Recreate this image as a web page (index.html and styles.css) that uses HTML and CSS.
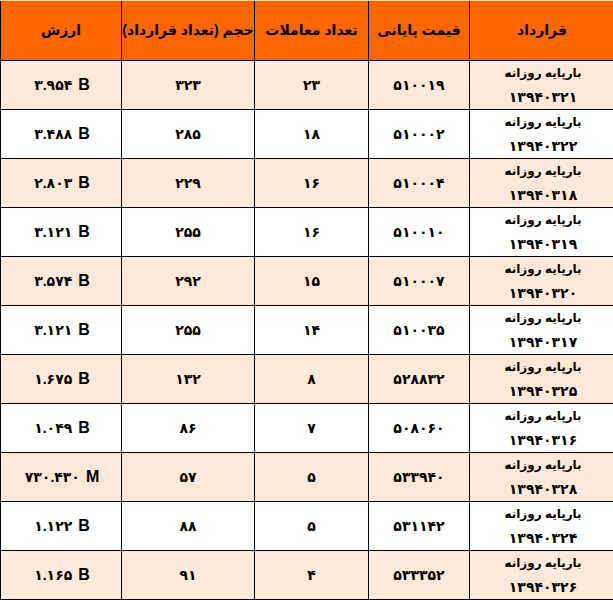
FILE: index.html
```html
<!DOCTYPE html>
<html lang="fa">
<head>
<meta charset="utf-8">
<title>قرارداد بارپایه روزانه</title>
<link rel="stylesheet" href="styles.css">
</head>
<body>
<div class="grid">
  <div class="cell head">قرارداد</div>
  <div class="cell head">قیمت پایانی</div>
  <div class="cell head">تعداد معاملات</div>
  <div class="cell head">حجم (تعداد قرارداد)</div>
  <div class="cell head">ارزش</div>

  <div class="cell odd contract"><span class="name">بارپایه روزانه</span><span>۱۳۹۴۰۳۲۱</span></div>
  <div class="cell odd">۵۱۰۰۱۹</div>
  <div class="cell odd">۲۳</div>
  <div class="cell odd">۳۲۳</div>
  <div class="cell odd val">۳.۹۵۴ <b>B</b></div>

  <div class="cell even contract"><span class="name">بارپایه روزانه</span><span>۱۳۹۴۰۳۲۲</span></div>
  <div class="cell even">۵۱۰۰۰۲</div>
  <div class="cell even">۱۸</div>
  <div class="cell even">۲۸۵</div>
  <div class="cell even val">۳.۴۸۸ <b>B</b></div>

  <div class="cell odd contract"><span class="name">بارپایه روزانه</span><span>۱۳۹۴۰۳۱۸</span></div>
  <div class="cell odd">۵۱۰۰۰۴</div>
  <div class="cell odd">۱۶</div>
  <div class="cell odd">۲۲۹</div>
  <div class="cell odd val">۲.۸۰۳ <b>B</b></div>

  <div class="cell even contract"><span class="name">بارپایه روزانه</span><span>۱۳۹۴۰۳۱۹</span></div>
  <div class="cell even">۵۱۰۰۱۰</div>
  <div class="cell even">۱۶</div>
  <div class="cell even">۲۵۵</div>
  <div class="cell even val">۳.۱۲۱ <b>B</b></div>

  <div class="cell odd contract"><span class="name">بارپایه روزانه</span><span>۱۳۹۴۰۳۲۰</span></div>
  <div class="cell odd">۵۱۰۰۰۷</div>
  <div class="cell odd">۱۵</div>
  <div class="cell odd">۲۹۲</div>
  <div class="cell odd val">۳.۵۷۴ <b>B</b></div>

  <div class="cell even contract"><span class="name">بارپایه روزانه</span><span>۱۳۹۴۰۳۱۷</span></div>
  <div class="cell even">۵۱۰۰۳۵</div>
  <div class="cell even">۱۴</div>
  <div class="cell even">۲۵۵</div>
  <div class="cell even val">۳.۱۲۱ <b>B</b></div>

  <div class="cell odd contract"><span class="name">بارپایه روزانه</span><span>۱۳۹۴۰۳۲۵</span></div>
  <div class="cell odd">۵۲۸۸۳۲</div>
  <div class="cell odd">۸</div>
  <div class="cell odd">۱۳۲</div>
  <div class="cell odd val">۱.۶۷۵ <b>B</b></div>

  <div class="cell even contract"><span class="name">بارپایه روزانه</span><span>۱۳۹۴۰۳۱۶</span></div>
  <div class="cell even">۵۰۸۰۶۰</div>
  <div class="cell even">۷</div>
  <div class="cell even">۸۶</div>
  <div class="cell even val">۱.۰۴۹ <b>B</b></div>

  <div class="cell odd contract"><span class="name">بارپایه روزانه</span><span>۱۳۹۴۰۳۲۸</span></div>
  <div class="cell odd">۵۳۳۹۴۰</div>
  <div class="cell odd">۵</div>
  <div class="cell odd">۵۷</div>
  <div class="cell odd val">۷۳۰.۴۳۰ <b>M</b></div>

  <div class="cell even contract"><span class="name">بارپایه روزانه</span><span>۱۳۹۴۰۳۲۴</span></div>
  <div class="cell even">۵۳۱۱۴۲</div>
  <div class="cell even">۵</div>
  <div class="cell even">۸۸</div>
  <div class="cell even val">۱.۱۲۲ <b>B</b></div>

  <div class="cell odd contract"><span class="name">بارپایه روزانه</span><span>۱۳۹۴۰۳۲۶</span></div>
  <div class="cell odd">۵۳۳۳۵۲</div>
  <div class="cell odd">۴</div>
  <div class="cell odd">۹۱</div>
  <div class="cell odd val">۱.۱۶۵ <b>B</b></div>
</div>
</body>
</html>
```

FILE: styles.css
```css
html, body {
  margin: 0;
  padding: 0;
  overflow: hidden;
  background: #ffffff;
}

body {
  font-family: "Liberation Sans", "DejaVu Sans", sans-serif;
  font-weight: bold;
  color: #000000;
}

.grid {
  display: grid;
  direction: rtl;
  width: 614px;
  grid-template-columns: 145px 101px 114px 133px 121px;
  grid-template-rows: 60px repeat(11, 49px);
  border-top: 1px solid #fbd4b4;
}

.cell {
  box-sizing: border-box;
  border-left: 1px solid #000000;
  border-bottom: 1px solid #000000;
  display: flex;
  align-items: center;
  justify-content: center;
  font-size: 14px;
  white-space: nowrap;
}

.head {
  background: #ff6600;
  font-size: 14px;
  padding-bottom: 1px;
}

.odd {
  background: #fde9d9;
}

.even {
  background: #ffffff;
}

.val {
  direction: ltr;
  gap: 6px;
  padding-left: 2px;
}

.val b {
  font-family: "Liberation Sans", sans-serif;
  font-size: 16px;
}

.contract {
  flex-direction: column;
  justify-content: flex-start;
  line-height: 24px;
  padding-left: 2px;
}

.contract span {
  display: block;
}

.contract .name {
  font-size: 12px;
}
```
